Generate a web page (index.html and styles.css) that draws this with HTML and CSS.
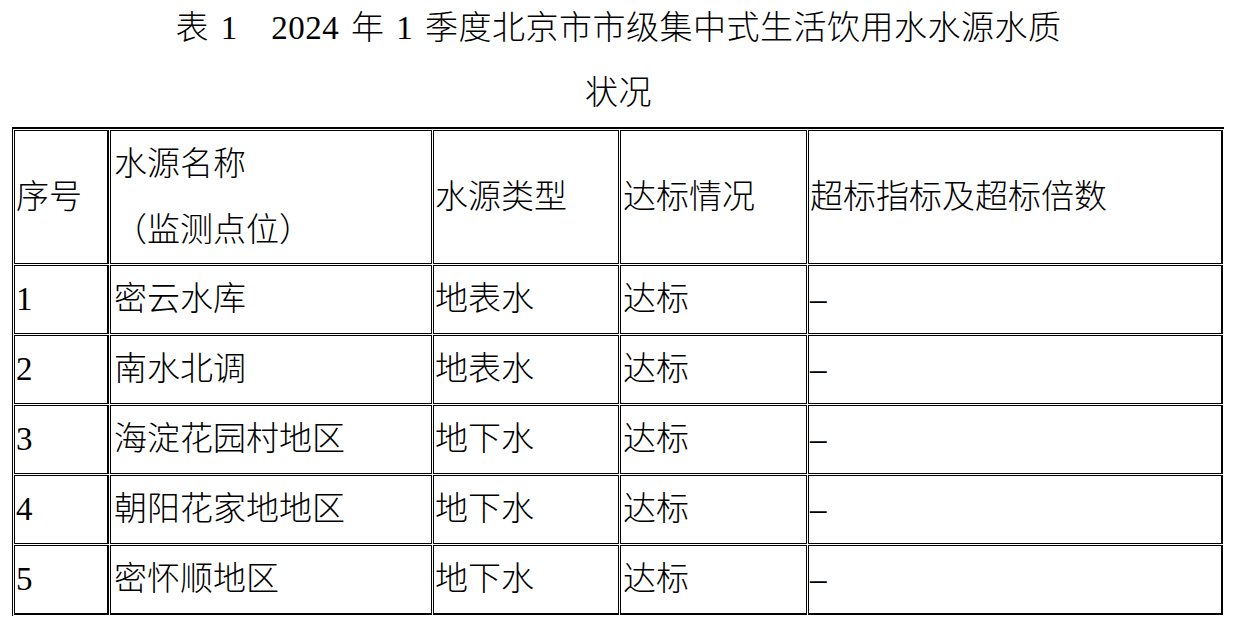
FILE: index.html
```html
<!DOCTYPE html>
<html lang="zh-CN">
<head>
<meta charset="utf-8">
<link rel="stylesheet" href="styles.css">
</head>
<body>
<div class="title">
  <div class="t1">表 1　2024 年 1 季度北京市市级集中式生活饮用水水源水质</div>
  <div class="t2">状况</div>
</div>
<table class="tbl">
  <colgroup>
    <col class="c1"><col class="c2"><col class="c3"><col class="c4"><col class="c5">
  </colgroup>
  <tr class="head">
    <td class="k1">序号</td>
    <td class="k2">水源名称<br>（监测点位）</td>
    <td class="k3">水源类型</td>
    <td class="k4">达标情况</td>
    <td class="k5">超标指标及超标倍数</td>
  </tr>
  <tr>
    <td class="k1 num">1</td><td class="k2">密云水库</td><td class="k3">地表水</td><td class="k4">达标</td><td class="k5 dash">–</td>
  </tr>
  <tr>
    <td class="k1 num">2</td><td class="k2">南水北调</td><td class="k3">地表水</td><td class="k4">达标</td><td class="k5 dash">–</td>
  </tr>
  <tr>
    <td class="k1 num">3</td><td class="k2">海淀花园村地区</td><td class="k3">地下水</td><td class="k4">达标</td><td class="k5 dash">–</td>
  </tr>
  <tr>
    <td class="k1 num">4</td><td class="k2">朝阳花家地地区</td><td class="k3">地下水</td><td class="k4">达标</td><td class="k5 dash">–</td>
  </tr>
  <tr class="last">
    <td class="k1 num">5</td><td class="k2">密怀顺地区</td><td class="k3">地下水</td><td class="k4">达标</td><td class="k5 dash">–</td>
  </tr>
</table>
</body>
</html>
```
FILE: styles.css
```css
html, body {
  margin: 0;
  padding: 0;
  background: #fff;
}
body {
  font-family: "Liberation Serif", "Noto Sans CJK SC", serif;
  font-size: 33px;
  font-weight: 300;
  color: #000;
}
.title {
  text-align: center;
}
.t1 {
  line-height: 56px;
  height: 56px;
  white-space: nowrap;
  letter-spacing: 0.5px;
  word-spacing: 3px;
  padding-right: 4px;
}
.t2 {
  margin-top: 3px;
  line-height: 68px;
  height: 68px;
  letter-spacing: 0.5px;
  padding-right: 4px;
}
.tbl {
  margin-left: 12px;
  width: 1205px;
  table-layout: fixed;
  border-collapse: separate;
  border-spacing: 1px;
  border-top: 2px solid #000;
  border-left: 1px solid #000;
  border-right: 0;
  border-bottom: 0;
}
.c1 { width: 95px; }
.c2 { width: 322px; }
.c3 { width: 186px; }
.c4 { width: 187px; }
.c5 { width: 415px; }
.tbl td {
  border: 1px solid #000;
  padding: 0 0 0 1px;
  height: 67px;
  line-height: 67px;
  vertical-align: middle;
  white-space: nowrap;
  overflow: hidden;
}
.tbl .head td {
  height: 132px;
  line-height: 66px;
}
.tbl td.k1 { border-right-width: 2px; }
.tbl td.k2 { padding-left: 3px; }
.tbl td.k4 { padding-left: 2px; }
.tbl td.k5 { border-right-width: 2px; padding-left: 1px; }
.tbl .last td { border-bottom-width: 2px; }
.num { font-weight: 400; }
.dash { font-weight: 400; }
```
